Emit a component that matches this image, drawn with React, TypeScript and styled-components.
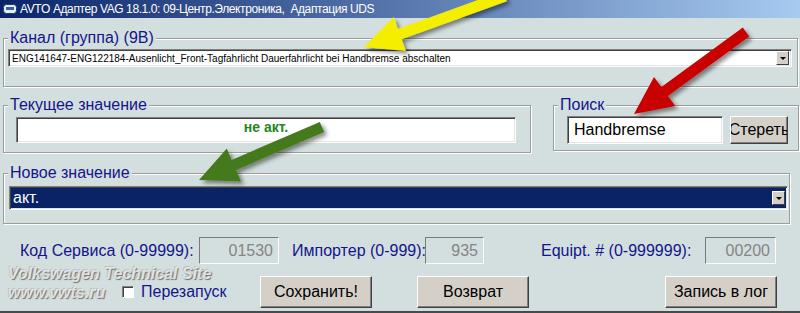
import React from "react";
import styled, { createGlobalStyle } from "styled-components";

const GlobalStyle = createGlobalStyle`
  html, body {
    margin: 0;
    padding: 0;
    background: #d3dfde;
  }
  body {
    font-family: "Liberation Sans", Arial, sans-serif;
  }
`;

const Window = styled.div`
  position: relative;
  width: 800px;
  height: 313px;
  box-sizing: border-box;
  background: #d3dfde;
  border-bottom: 2px solid #4a4a4a;
  overflow: hidden;
`;

const TitleBar = styled.div`
  height: 18px;
  display: flex;
  align-items: center;
  padding-left: 3px;
  background: linear-gradient(to right, #0a246a, #a6caf0);
  color: #fff;
`;

const Title = styled.span`
  margin-left: 3px;
  font-size: 12px;
  letter-spacing: -0.4px;
  white-space: pre;
`;

const Body = styled.div`
  padding-left: 3px;
  display: flex;
  flex-direction: column;
`;

const Group = styled.fieldset<{ $width: number; $mt?: number; $ml?: number }>`
  margin: ${(p) => p.$mt ?? 0}px 0 0 ${(p) => p.$ml ?? 0}px;
  padding: 0;
  width: ${(p) => p.$width}px;
  box-sizing: border-box;
  min-width: 0;
  border: 1px solid #9c9c9c;
  box-shadow: inset 1px 1px 0 #fff, 1px 1px 0 #fff;
`;

const Legend = styled.legend`
  margin-left: 4px;
  padding: 0 2px;
  font-size: 16px;
  line-height: 20px;
  color: #14148c;
  background: #d3dfde;
`;

const Inner = styled.div<{ $pad: string }>`
  display: flex;
  align-items: flex-start;
  padding: ${(p) => p.$pad};
`;

const Row = styled.div<{ $mt: number }>`
  display: flex;
  align-items: flex-start;
  margin-top: ${(p) => p.$mt}px;
`;

const Sunken = styled.div<{ $w?: number; $h: number; $bg?: string }>`
  box-sizing: border-box;
  width: ${(p) => (p.$w ? `${p.$w}px` : "100%")};
  height: ${(p) => p.$h}px;
  background: ${(p) => p.$bg ?? "#fff"};
  border: 1px solid;
  border-color: #808080 #fff #fff #808080;
  box-shadow: inset 1px 1px 0 #404040, inset -1px -1px 0 #e4e4e4;
`;

const Combo = styled(Sunken)`
  display: flex;
  align-items: center;
  padding: 1px 2px 1px 3px;
`;

const ComboText = styled.span<{ $size: number; $color: string }>`
  flex: 1;
  font-size: ${(p) => p.$size}px;
  color: ${(p) => p.$color};
  white-space: nowrap;
  overflow: hidden;
`;

const DropButton = styled.span`
  width: 13px;
  height: 14px;
  box-sizing: border-box;
  flex: none;
  display: flex;
  align-items: center;
  justify-content: center;
  background: #d4d0c8;
  border: 1px solid;
  border-color: #fff #404040 #404040 #fff;
  &::after {
    content: "";
    border-left: 3px solid transparent;
    border-right: 3px solid transparent;
    border-top: 3px solid #000;
  }
`;

const CurrentValue = styled(Sunken)`
  text-align: center;
  padding-top: 1px;
  font-size: 14px;
  font-weight: bold;
  color: #22881c;
`;

const SearchInput = styled(Sunken)`
  display: flex;
  align-items: center;
  padding-left: 6px;
  font-size: 16px;
  color: #000;
`;

const Button = styled.div<{ $w: number; $h: number; $ml?: number }>`
  box-sizing: border-box;
  width: ${(p) => p.$w}px;
  height: ${(p) => p.$h}px;
  margin-left: ${(p) => p.$ml ?? 0}px;
  display: flex;
  align-items: center;
  justify-content: center;
  overflow: hidden;
  white-space: nowrap;
  background: #d4d0c8;
  border: 1px solid;
  border-color: #fff #404040 #404040 #fff;
  box-shadow: inset -1px -1px 0 #808080;
  font-size: 16px;
  color: #000;
`;

const FieldsRow = styled.div`
  display: flex;
  align-items: center;
  margin-top: 13px;
  padding-left: 17px;
`;

const FieldLabel = styled.span<{ $w: number; $ml?: number }>`
  width: ${(p) => p.$w}px;
  margin-left: ${(p) => p.$ml ?? 0}px;
  font-size: 16px;
  color: #14148c;
  white-space: nowrap;
`;

const NumberBox = styled.div<{ $w: number }>`
  box-sizing: border-box;
  width: ${(p) => p.$w}px;
  height: 27px;
  padding: 4px 5px 0 0;
  text-align: right;
  font-size: 16px;
  color: #858585;
  border: 1px solid;
  border-color: #7a7a7a #fff #fff #7a7a7a;
`;

const ButtonsRow = styled.div`
  display: flex;
  align-items: center;
  margin-top: 12px;
  padding-left: 119px;
`;

const CheckWrap = styled.label`
  width: 138px;
  display: flex;
  align-items: center;
  font-size: 16px;
  color: #14148c;
`;

const CheckBox = styled.span`
  width: 12px;
  height: 12px;
  box-sizing: border-box;
  margin-right: 7px;
  background: #fff;
  border: 1px solid;
  border-color: #808080 #fff #fff #808080;
  box-shadow: inset 1px 1px 0 #404040;
`;

const Watermark = styled.div`
  position: absolute;
  left: 8px;
  top: 264px;
  font-size: 16px;
  line-height: 19px;
  font-weight: bold;
  font-style: italic;
  color: rgba(245, 245, 245, 0.8);
  text-shadow: 1px 1px 1px rgba(70, 70, 70, 0.7), -1px -1px 0 rgba(150, 150, 150, 0.4);
  pointer-events: none;
`;

const Overlay = styled.svg`
  position: absolute;
  left: 0;
  top: 0;
  pointer-events: none;
`;

type Pt = [number, number];

// polygon for a thick arrow from tail to tip
const arrowPoints = (tail: Pt, tip: Pt, shaft: number, headL: number, headW: number) => {
  const dx = tip[0] - tail[0];
  const dy = tip[1] - tail[1];
  const len = Math.hypot(dx, dy);
  const ux = dx / len;
  const uy = dy / len;
  const nx = -uy;
  const ny = ux;
  const bx = tip[0] - ux * headL;
  const by = tip[1] - uy * headL;
  const pts: Pt[] = [
    [tail[0] + (nx * shaft) / 2, tail[1] + (ny * shaft) / 2],
    [bx + (nx * shaft) / 2, by + (ny * shaft) / 2],
    [bx + (nx * headW) / 2, by + (ny * headW) / 2],
    tip,
    [bx - (nx * headW) / 2, by - (ny * headW) / 2],
    [bx - (nx * shaft) / 2, by - (ny * shaft) / 2],
    [tail[0] - (nx * shaft) / 2, tail[1] - (ny * shaft) / 2],
  ];
  return pts.map((p) => `${p[0].toFixed(1)},${p[1].toFixed(1)}`).join(" ");
};

const arrows = [
  { tail: [505, -4] as Pt, tip: [364, 47] as Pt, color: "#f4ee00" },
  { tail: [746, 32] as Pt, tip: [634, 114] as Pt, color: "#c80000" },
  { tail: [322, 127] as Pt, tip: [199, 180] as Pt, color: "#457a1c" },
];

const AppIcon = () => (
  <svg width="14" height="12" viewBox="0 0 14 12">
    <rect x="0.5" y="1.5" width="13" height="9" rx="3" fill="#e8eef8" stroke="#203a70" />
    <rect x="3" y="4" width="8" height="3" fill="#3a5fa8" />
  </svg>
);

const App = () => {
  return (
    <Window>
      <GlobalStyle />
      <TitleBar>
        <AppIcon />
        <Title>{"AVTO Адаптер VAG 18.1.0: 09-Центр.Электроника,  Адаптация UDS"}</Title>
      </TitleBar>
      <Body>
        <Group $width={795} $mt={10}>
          <Legend>Канал (группа) (9B)</Legend>
          <Inner $pad="1px 5px 19px 4px">
            <Combo $h={18}>
              <ComboText $size={10} $color="#000">
                ENG141647-ENG122184-Ausenlicht_Front-Tagfahrlicht Dauerfahrlicht bei Handbremse abschalten
              </ComboText>
              <DropButton />
            </Combo>
          </Inner>
        </Group>

        <Row $mt={8}>
          <Group $width={528}>
            <Legend>Текущее значение</Legend>
            <Inner $pad="2px 12px 9px 12px">
              <CurrentValue $w={500} $h={26}>не акт.</CurrentValue>
            </Inner>
          </Group>
          <Group $width={246} $ml={22}>
            <Legend>Поиск</Legend>
            <Inner $pad="1px 0 6px 13px">
              <SearchInput $w={156} $h={28}>Handbremse</SearchInput>
              <Button $w={58} $h={28} $ml={7}>Стереть</Button>
            </Inner>
          </Group>
        </Row>

        <Group $width={787} $mt={10}>
          <Legend>Новое значение</Legend>
          <Inner $pad="3px 1px 13px 5px">
            <Combo $h={24} $bg="#0a2266">
              <ComboText $size={16} $color="#fff">акт.</ComboText>
              <DropButton />
            </Combo>
          </Inner>
        </Group>

        <FieldsRow>
          <FieldLabel $w={179}>Код Сервиса (0-99999):</FieldLabel>
          <NumberBox $w={80}>01530</NumberBox>
          <FieldLabel $w={133} $ml={13}>Импортер (0-999):</FieldLabel>
          <NumberBox $w={59}>935</NumberBox>
          <FieldLabel $w={164} $ml={57}>Equipt. # (0-999999):</FieldLabel>
          <NumberBox $w={71}>00200</NumberBox>
        </FieldsRow>

        <ButtonsRow>
          <CheckWrap>
            <CheckBox />
            Перезапуск
          </CheckWrap>
          <Button $w={112} $h={32}>Сохранить!</Button>
          <Button $w={112} $h={32} $ml={45}>Возврат</Button>
          <Button $w={112} $h={32} $ml={136}>Запись в лог</Button>
        </ButtonsRow>
      </Body>

      <Watermark>
        Volkswagen Technical Site
        <br />
        www.vwts.ru
      </Watermark>

      <Overlay width="800" height="313">
        <defs>
          <filter id="shade" x="-20%" y="-20%" width="140%" height="140%">
            <feDropShadow dx="3" dy="3" stdDeviation="2" floodColor="#000" floodOpacity="0.45" />
          </filter>
        </defs>
        {arrows.map((a, i) => (
          <polygon
            key={i}
            points={arrowPoints(a.tail, a.tip, 11, 38, 36)}
            fill={a.color}
            filter="url(#shade)"
          />
        ))}
      </Overlay>
    </Window>
  );
};

export default App;
